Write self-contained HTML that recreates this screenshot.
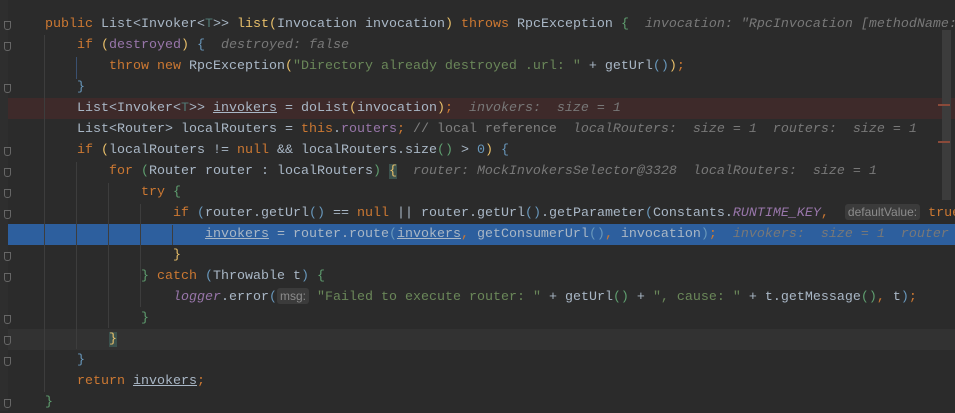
<!DOCTYPE html>
<html><head><meta charset="utf-8"><style>
body{margin:0;width:955px;height:411px;background:#2b2b2b;overflow:hidden;position:relative;font-family:"Liberation Mono",monospace;font-size:13.33px;}
.w{position:absolute;left:0;top:2px;width:955px;height:411px}
.gut{position:absolute;left:0;top:0;width:8px;height:411px;background:#2e2e2e;}
.ln{position:absolute;left:0;width:955px;height:21px;line-height:21px;white-space:pre;color:#a9b7c6}
.ln span.c{position:absolute;left:45px;top:0}
.k{color:#cc7832}.s{color:#6a8759}.h{color:#787878;font-style:italic}.f{color:#9876aa}.t{color:#507874}
.y{color:#e8bf6a}.b{color:#6897bb}.g{color:#5f9e6f}.fi{color:#9876aa;font-style:italic}
.u{text-decoration:underline}
.p{display:inline-block;background:#3b3b3b;color:#8c8c8c;font-family:"Liberation Sans",sans-serif;font-size:12px;border-radius:3px;padding:0 3px;line-height:16px}
.fold{position:absolute;left:4px;width:7px;height:9px;border:1px solid #666;border-radius:0 0 3px 3px;box-sizing:border-box}
.ig{position:absolute;width:1px;background:#3d3d3d}
</style></head><body>
<div class="gut"></div>
<div class="w">
<div class="ln" style="top:96px;left:8px;background:#3e2a2a"></div>
<div class="ln" style="top:222px;left:8px;background:#2d5f9e"></div>
<div class="ln" style="top:327px;left:8px;background:#323232"></div>
<div class="ig" style="left:44px;top:33px;height:357px"></div>
<div class="ig" style="left:76px;top:160px;height:187px"></div>
<div class="ig" style="left:108px;top:181px;height:145px"></div>
<div class="ig" style="left:140px;top:202px;height:103px"></div>
<div class="ig" style="left:172px;top:223px;height:20px"></div>
<div class="ig" style="left:76px;top:55px;height:22px;background:#3a5070"></div>
<div class="fold" style="top:19px"></div><div class="fold" style="top:40px"></div><div class="fold" style="top:82px"></div>
<div class="fold" style="top:145px"></div><div class="fold" style="top:166px"></div><div class="fold" style="top:187px"></div><div class="fold" style="top:208px"></div>
<div class="fold" style="top:250px"></div><div class="fold" style="top:271px"></div><div class="fold" style="top:313px"></div><div class="fold" style="top:334px"></div><div class="fold" style="top:355px"></div><div class="fold" style="top:397px"></div>
<div class="ln" style="top:12px"><span class="c"><span class="k">public </span>List&lt;Invoker&lt;<span class="t">T</span>&gt;&gt; <span class="y">list</span><span class="y">(</span>Invocation invocation<span class="y">)</span> <span class="k">throws </span>RpcException <span class="g">{</span>  <span class="h">invocation: "RpcInvocation [methodName:</span></span></div>
<div class="ln" style="top:33px"><span class="c">    <span class="k">if </span><span class="y">(</span><span class="f">destroyed</span><span class="y">)</span> <span class="b">{</span>  <span class="h">destroyed: false</span></span></div>
<div class="ln" style="top:54px"><span class="c">        <span class="k">throw new </span>RpcException<span class="y">(</span><span class="s">"Directory already destroyed .url: "</span> + getUrl<span class="b">()</span><span class="y">)</span><span class="k">;</span></span></div>
<div class="ln" style="top:75px"><span class="c">    <span class="b">}</span></span></div>
<div class="ln" style="top:96px"><span class="c">    List&lt;Invoker&lt;<span class="t">T</span>&gt;&gt; <span class="u">invokers</span> = doList<span class="y">(</span>invocation<span class="y">)</span><span class="k">;</span>  <span class="h">invokers:  size = 1</span></span></div>
<div class="ln" style="top:117px"><span class="c">    List&lt;Router&gt; localRouters = <span class="k">this</span>.<span class="f">routers</span><span class="k">;</span> <span style="color:#808080">// local reference</span>  <span class="h">localRouters:  size = 1  routers:  size = 1</span></span></div>
<div class="ln" style="top:138px"><span class="c">    <span class="k">if </span><span class="y">(</span>localRouters != <span class="k">null </span>&amp;&amp; localRouters.size<span class="g">()</span> &gt; <span class="b">0</span><span class="y">)</span> <span class="b">{</span></span></div>
<div class="ln" style="top:159px"><span class="c">        <span class="k">for </span><span class="g">(</span>Router router : localRouters<span class="g">)</span> <span class="y" style="background:#3b514d">{</span>  <span class="h">router: MockInvokersSelector@3328  localRouters:  size = 1</span></span></div>
<div class="ln" style="top:180px"><span class="c">            <span class="k">try </span><span class="g">{</span></span></div>
<div class="ln" style="top:201px"><span class="c">                <span class="k">if </span><span class="b">(</span>router.getUrl<span class="b">()</span> == <span class="k">null </span>|| router.getUrl<span class="b">()</span>.getParameter<span class="b">(</span>Constants.<span class="fi">RUNTIME_KEY</span><span class="k">,</span>  <span class="p">defaultValue:</span> <span class="k">true</span></span></div>
<div class="ln" style="top:222px"><span class="c">                    <span class="u">invokers</span> = router.route<span class="b">(</span><span class="u">invokers</span><span class="k">,</span> getConsumerUrl<span class="b">()</span><span class="k">,</span> invocation<span class="b">)</span><span class="k">;</span>  <span class="h">invokers:  size = 1  router</span></span></div>
<div class="ln" style="top:243px"><span class="c">                <span class="y">}</span></span></div>
<div class="ln" style="top:264px"><span class="c">            <span class="g">}</span> <span class="k">catch </span><span class="b">(</span>Throwable t<span class="b">)</span> <span class="g">{</span></span></div>
<div class="ln" style="top:285px"><span class="c">                <span class="fi">logger</span>.error<span class="b">(</span><span class="p">msg:</span> <span class="s">"Failed to execute router: "</span> + getUrl<span class="g">()</span> + <span class="s">", cause: "</span> + t.getMessage<span class="g">()</span><span class="k">,</span> t<span class="b">)</span><span class="k">;</span></span></div>
<div class="ln" style="top:306px"><span class="c">            <span class="g">}</span></span></div>
<div class="ln" style="top:327px"><span class="c">        <span class="y" style="background:#3b514d">}</span></span></div>
<div class="ln" style="top:348px"><span class="c">    <span class="b">}</span></span></div>
<div class="ln" style="top:369px"><span class="c">    <span class="k">return </span><span class="u">invokers</span><span class="k">;</span></span></div>
<div class="ln" style="top:390px"><span class="c"><span class="g">}</span></span></div>
</div>
<div style="position:absolute;left:942px;top:30px;width:9px;height:170px;background:#3c3c3c"></div>
<div style="position:absolute;left:938px;top:104px;width:12px;height:2px;background:#8a4a3a"></div>
<div style="position:absolute;left:938px;top:141px;width:12px;height:2px;background:#8a4a3a"></div>
</body></html>
